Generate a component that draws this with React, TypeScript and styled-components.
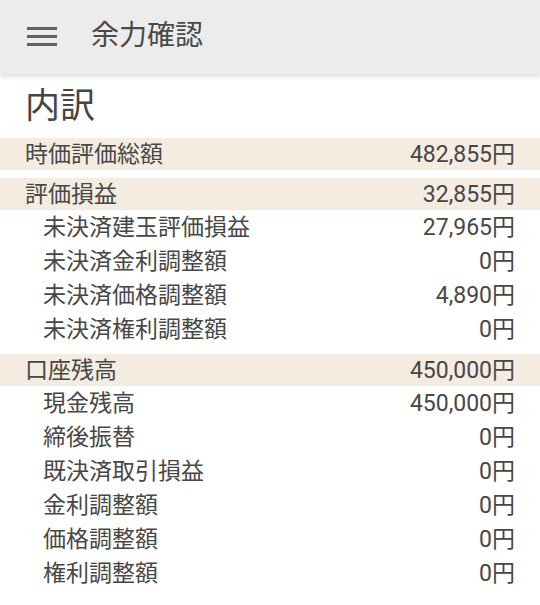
import React from "react";
import styled, { createGlobalStyle } from "styled-components";

type Item = { label: string; value: string };
type Section = { title: Item; items: Item[] };

const sections: Section[] = [
  {
    title: { label: "時価評価総額", value: "482,855円" },
    items: [],
  },
  {
    title: { label: "評価損益", value: "32,855円" },
    items: [
      { label: "未決済建玉評価損益", value: "27,965円" },
      { label: "未決済金利調整額", value: "0円" },
      { label: "未決済価格調整額", value: "4,890円" },
      { label: "未決済権利調整額", value: "0円" },
    ],
  },
  {
    title: { label: "口座残高", value: "450,000円" },
    items: [
      { label: "現金残高", value: "450,000円" },
      { label: "締後振替", value: "0円" },
      { label: "既決済取引損益", value: "0円" },
      { label: "金利調整額", value: "0円" },
      { label: "価格調整額", value: "0円" },
      { label: "権利調整額", value: "0円" },
    ],
  },
];

const App = () => {
  return (
    <>
      <GlobalStyle />
      <Screen>
        <AppBar>
          <MenuButton aria-label="menu">
            <MenuLine />
            <MenuLine />
            <MenuLine />
          </MenuButton>
          <AppTitle>余力確認</AppTitle>
        </AppBar>
        <Content>
          <PageTitle>内訳</PageTitle>
          {sections.map((s) => (
            <SectionBlock key={s.title.label}>
              <HeadRow>
                <Label>{s.title.label}</Label>
                <Value>{s.title.value}</Value>
              </HeadRow>
              {s.items.map((it) => (
                <ItemRow key={it.label}>
                  <Label>{it.label}</Label>
                  <Value>{it.value}</Value>
                </ItemRow>
              ))}
            </SectionBlock>
          ))}
        </Content>
      </Screen>
    </>
  );
};

const GlobalStyle = createGlobalStyle`
  body {
    margin: 0;
    background: #ffffff;
    font-family: Roboto, "Noto Sans CJK JP", sans-serif;
    color: #474747;
  }
`;
const Screen = styled.div`
  width: 540px;
  min-height: 605px;
  overflow: hidden;
`;
const AppBar = styled.header`
  height: 74px;
  background-color: #ececec;
  display: flex;
  align-items: center;
  padding-left: 27px;
  box-shadow: 0 2px 5px rgba(0, 0, 0, 0.16);
  position: relative;
  z-index: 1;
`;
const MenuButton = styled.div`
  width: 30px;
  display: flex;
  flex-direction: column;
  gap: 5px;
  margin-top: -2px;
`;
const MenuLine = styled.span`
  display: block;
  height: 3px;
  background-color: #626262;
`;
const AppTitle = styled.h1`
  margin: -2px 0 0 34px;
  font-size: 28px;
  font-weight: 400;
  color: #4a4a4a;
  line-height: 1;
`;
const Content = styled.main`
  padding-bottom: 20px;
`;
const PageTitle = styled.h2`
  margin: 0;
  height: 64px;
  display: flex;
  align-items: center;
  padding-left: 25px;
  font-size: 35px;
  font-weight: 400;
  color: #454545;
  line-height: 1;
`;
const SectionBlock = styled.section`
  & + & {
    margin-top: 8px;
  }
`;
const HeadRow = styled.div`
  height: 32px;
  display: flex;
  align-items: center;
  justify-content: space-between;
  padding: 0 25px;
  background-color: #f4ece1;
`;
const ItemRow = styled.div`
  height: 34px;
  display: flex;
  align-items: center;
  justify-content: space-between;
  padding: 0 25px 0 43px;
`;
const Label = styled.span`
  font-size: 23px;
  line-height: 1;
`;
const Value = styled.span`
  font-size: 23px;
  line-height: 1;
`;

export default App;
